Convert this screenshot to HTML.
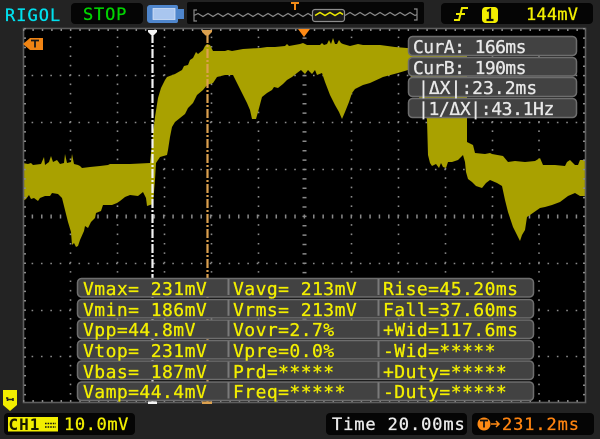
<!DOCTYPE html>
<html><head><meta charset="utf-8"><style>
html,body{margin:0;padding:0;background:#232323;width:600px;height:439px;overflow:hidden}
svg{display:block}
text{font-family:"DejaVu Sans Mono","Liberation Mono",monospace;font-size:18px;letter-spacing:.45px}
.y text,text.y{fill:#f2ee00;stroke:#f2ee00;stroke-width:.3px}
text.w{fill:#e8e8e8;stroke:#e8e8e8;stroke-width:.3px}
</style></head><body>
<svg width="600" height="439" viewBox="0 0 600 439" xmlns="http://www.w3.org/2000/svg">
<rect width="600" height="439" fill="#232323"/>
<!-- header -->
<text x="5" y="21" style="font-size:17px;letter-spacing:1px;stroke:#00e0ee;stroke-width:.3px" fill="#00e0ee">RIGOL</text>
<rect x="71" y="3" width="72" height="21" rx="4" fill="#050505"/>
<text x="83" y="20" style="font-size:17px;letter-spacing:.8px;stroke:#00d400;stroke-width:.3px" fill="#00d400">STOP</text>
<path d="M150 5h26a2 2 0 0 1 2 2v2h6v10h-6v2a2 2 0 0 1-2 2h-26a3 3 0 0 1-3-3V8a3 3 0 0 1 3-3z" fill="#4f86cc"/>
<rect x="153" y="8.500" width="22" height="11" fill="#a9c6ef" stroke="#dfe9f8" stroke-width=".7"/>
<rect x="187" y="2" width="237" height="22" rx="2" fill="#060606"/>
<path d="M197 10h-3v11h3M194 15.500l4-2 5 3 5-3 5 3 5-3 5 3 5-3 5 3 5-3 5 3 5-3 5 3 5-3 5 3 5-3 5 3 5-3 5 3 5-3 5 3 5-3 5 3 5-3 5 3 5-3" fill="none" stroke="#8a8a8a" stroke-width="1.200"/>
<path d="M345 15.500l5-3 5 3 5-3 5 3 5-3 5 3 5-3 5 3 5-3 5 3 5-3 5 3 5-3 5 3 2-1M414 9h3v11h-3" fill="none" stroke="#8a8a8a" stroke-width="1.200"/>
<rect x="312.500" y="9.500" width="32" height="12" rx="2.500" fill="#1a1a1a" stroke="#8d8d8d" stroke-width="1.200"/>
<path d="M315 15.500l5-3 5 3 5-3 5 3 5-3 3 2" fill="none" stroke="#eeea00" stroke-width="1.500"/>
<path d="M291 2h8v2h-3v6h-2V4h-3z" fill="#f08a18"/>
<rect x="441" y="3" width="152" height="21" rx="4" fill="#050505"/>
<path d="M454 20h5l3-12h6M456 14h9" fill="none" stroke="#eeea00" stroke-width="2"/>
<rect x="482" y="7" width="16" height="16" rx="3.500" fill="#f2ee00"/>
<path d="M487 11l3-1.500v10M486.500 20h7" fill="none" stroke="#111" stroke-width="2.200"/>
<text x="526" y="20" style="font-size:17px;letter-spacing:.2px" class="y">144mV</text>
<!-- scope -->
<rect x="23" y="28" width="563" height="375" fill="#000"/>
<g fill="none" stroke="#8a8a8a" stroke-width="1.600" stroke-dasharray="1.600 7.780" stroke-dashoffset=".8">
<path d="M23 75.500H586M23 122.500H586M23 169.500H586M23 263.500H586M23 310.500H586M23 356.500H586"/>
<path d="M70.500 28V403M117.500 28V403M164.500 28V403M211.500 28V403M258.500 28V403M351.500 28V403M398.500 28V403M445.500 28V403M492.500 28V403M539 28V403"/>
</g>
<path d="M23 216.500H586" stroke="#8a8a8a" stroke-width="4" stroke-dasharray="1.500 7.880" stroke-dashoffset=".75" fill="none"/>
<path d="M304.500 28V403" stroke="#8a8a8a" stroke-width="4" stroke-dasharray="1.500 7.880" fill="none"/>
<!-- waveform -->
<polygon fill="#a9a100" points="23,163 28,164 31,163 33,165 41,164 44,157 45,165 49,162 51,156 53,162 57,160 60,164 64,163 65,154 67,163 71,162 72,154 74,164 78,165 80,166 82,168 90,167 100,166 108,165 110,164 130,164 150,163 152,143 155,117 158,98 161,88 165,80 167,77 175,74 182,70 184,66 188,65 190,60 193,58 196,52 198,54 203,50 205,46 207,44 210,45 213,51 225,51 228,50 232,51 243,49 260,48 267,47 275,47 285,46 287,44 289,46 300,44 303,43 307,45 320,45 322,43 324,45 327,44 329,40 331,44 333,38 335,44 337,44 339,40 341,43 343,44 350,46 358,44 363,45 380,45 395,47 407,48 467,50 467,142 473,145 475,153 485,154 490,153 492,154 503,156 508,162 515,161 525,162 535,161 540,158 543,165 555,165 565,166 567,162 570,160 575,165 578,165 580,160 585,160 585,196 580,196 575,193 568,196 560,202 552,205 545,207 540,208 530,215 527,217 525,230 522,235 520,241 517,235 513,227 508,212 505,200 502,186 497,183 490,180 486,183 482,188 476,186 472,182 468,179 466,172 465,162 463,155 458,160 452,162 448,162 446,168 443,167 441,163 439,168 436,164 432,166 430,163 428,155 427,120 425,112 408,70 398,73 383,77 370,83 363,85 355,89 352,93 349,102 345,112 342,119 339,112 335,105 330,95 325,82 322,73 317,75 315,70 312,74 308,70 305,74 301,70 297,73 292,77 287,80 283,84 278,88 274,87 272,90 267,93 262,97 258,112 256,119 252,119 250,110 247,103 242,93 237,83 233,75 225,75 217,77 213,83 207,85 203,90 197,95 193,103 188,108 185,114 180,118 175,122 172,127 170,137 168,150 167,155 160,157 156,163 155,180 153,204 147,206 146,198 143,192 138,196 130,195 125,197 120,201 117,203 112,205 103,205 101,211 96,213 95,218 91,222 88,228 85,226 84,231 80,240 78,246 76,247 74,243 72,245 71,232 68,222 65,210 62,198 58,194 52,193 50,196 45,196 40,198 38,201 34,198 31,199 29,195 26,199 23,201"/>
<!-- frame -->
<rect x="23.500" y="28.500" width="562" height="374" fill="none" stroke="#5e5e5e" stroke-width="1.600"/>
<g stroke="#8b8b8b" stroke-width="2" fill="none" stroke-dasharray="1.500 7.880">
<path d="M23 30H586M23 401H586M25 28V403M584 28V403"/>
</g>
<!-- cursors -->
<path d="M152.500 34V403" stroke="#f4f4f4" stroke-width="2.200" stroke-dasharray="9 2 2 2" fill="none"/>
<path d="M207.500 34V403" stroke="#dca14f" stroke-width="2.200" stroke-dasharray="9 2 2 2" fill="none"/>
<path d="M148 30h9v2l-3 3h-3l-3-3z" fill="#f4f4f4"/>
<path d="M202 30h10v2l-3.500 3.500h-3L202 32z" fill="#dca14f"/>
<rect x="148" y="401.500" width="9" height="2.500" fill="#f4f4f4"/>
<rect x="202" y="401.500" width="10" height="2.500" fill="#dca14f"/>
<path d="M298 29h12l-6 8z" fill="#ff8a14"/>
<path d="M23 44l7-6h13v12H30z" fill="#f08414"/>
<path d="M31 40.500h8M35 40.500v7" stroke="#1a1a1a" stroke-width="1.800" fill="none"/>
<!-- cursor panel -->
<g fill="#424242" stroke="#6e6e6e" stroke-width="1.500">
<rect x="408.500" y="36.500" width="168" height="19" rx="4"/>
<rect x="408.500" y="57.500" width="168" height="18.500" rx="4"/>
<rect x="408.500" y="77.500" width="168" height="19" rx="4"/>
<rect x="408.500" y="98.500" width="168" height="19" rx="4"/>
</g>
<text x="413" y="53" class="w" style="letter-spacing:-.57px">CurA: 166ms</text>
<text x="413" y="74" class="w" style="letter-spacing:-.57px">CurB: 190ms</text>
<text x="418" y="94" class="w" style="letter-spacing:0">|ΔX|:23.2ms</text>
<text x="418" y="115" class="w" style="letter-spacing:-.38px">|1/ΔX|:43.1Hz</text>
<!-- measure panel -->
<g fill="#424242" stroke="#6e6e6e" stroke-width="1.500">
<rect x="77.500" y="278.500" width="456" height="18.500" rx="4"/>
<rect x="77.500" y="299.500" width="456" height="18.500" rx="4"/>
<rect x="77.500" y="320" width="456" height="18.500" rx="4"/>
<rect x="77.500" y="340.500" width="456" height="18.500" rx="4"/>
<rect x="77.500" y="361" width="456" height="18.500" rx="4"/>
<rect x="77.500" y="382" width="456" height="18.500" rx="4"/>
</g>
<path d="M228.500 279V400M378.500 279V400" stroke="#7a7a7a" stroke-width="2" fill="none" stroke-dasharray="16 4.700"/>
<g class="y">
<text x="83" y="295">Vmax= 231mV</text><text x="233" y="295">Vavg= 213mV</text><text x="383" y="295">Rise=45.20ms</text>
<text x="83" y="316">Vmin= 186mV</text><text x="233" y="316">Vrms= 213mV</text><text x="383" y="316">Fall=37.60ms</text>
<text x="83" y="336">Vpp=44.8mV</text><text x="233" y="336">Vovr=2.7%</text><text x="383" y="336">+Wid=117.6ms</text>
<text x="83" y="357">Vtop= 231mV</text><text x="233" y="357">Vpre=0.0%</text><text x="383" y="357">-Wid=*****</text>
<text x="83" y="378">Vbas= 187mV</text><text x="233" y="378">Prd=*****</text><text x="383" y="378">+Duty=*****</text>
<text x="83" y="398">Vamp=44.4mV</text><text x="233" y="398">Freq=*****</text><text x="383" y="398">-Duty=*****</text>
</g>
<!-- bottom -->
<path d="M3 390h14v15l-7 6-7-6z" fill="#f2ee00"/>
<path d="M6 398h1.500v3M7 399.500h6M13 398v3" stroke="#222" stroke-width="1.600" fill="none"/>
<rect x="4" y="413" width="131" height="22" rx="4" fill="#050505"/>
<rect x="8" y="417" width="50" height="14.500" fill="#f2ee00"/>
<text x="8.500" y="430" style="font-size:16px;letter-spacing:1px;font-weight:bold" fill="#1a1a00">CH1</text>
<path d="M45 423.500h11M45 427h11" stroke="#111" stroke-width="1.400" stroke-dasharray="1.600 1"/>
<text x="64" y="430" style="font-size:17px;letter-spacing:.6px" class="y">10.0mV</text>
<rect x="326" y="413" width="141" height="22" rx="4" fill="#050505"/>
<text x="332" y="430" style="font-size:17px;letter-spacing:.9px;stroke:#ececec;stroke-width:.3px" fill="#ececec">Time 20.00ms</text>
<rect x="472" y="413" width="122" height="22" rx="4" fill="#050505"/>
<circle cx="484" cy="424" r="6.500" fill="#ff8a14"/>
<path d="M480 420.500h8M484 420.500v7" stroke="#111" stroke-width="1.700" fill="none"/>
<path d="M491 424h8M496 421l3 3-3 3" stroke="#ff8a14" stroke-width="1.500" fill="none"/>
<text x="502" y="430" style="font-size:17px;letter-spacing:.9px;stroke:#ff8410;stroke-width:.3px" fill="#ff8410">231.2ms</text>
</svg>
</body></html>
